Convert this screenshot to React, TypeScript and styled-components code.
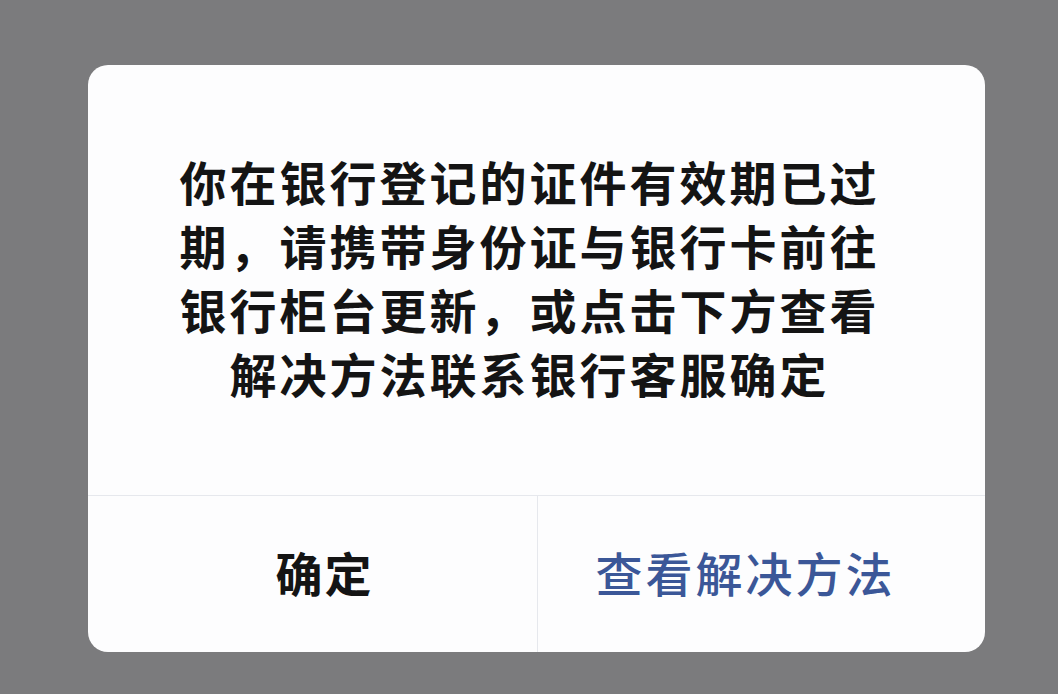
import React from 'react'
import styled, { createGlobalStyle } from 'styled-components'

const GlobalStyle = createGlobalStyle`
  html, body {
    margin: 0;
    padding: 0;
    background: #7b7b7d;
  }
  body {
    font-family: "Noto Sans CJK SC", "Noto Sans", sans-serif;
  }
`

const Page = styled.div`
  width: 1058px;
  height: 694px;
  box-sizing: border-box;
  padding: 65px 73px 0 88px;
`

const Dialog = styled.div`
  width: 897px;
  height: 587px;
  background: #fdfdfe;
  border-radius: 20px;
  overflow: hidden;
  display: flex;
  flex-direction: column;
`

const Body = styled.div`
  height: 430px;
  display: flex;
  align-items: center;
  justify-content: center;
  border-bottom: 1px solid #e6e8ed;
`

const Message = styled.p`
  margin: 0 14px 6px 0;
  width: 710px;
  text-align: center;
  font-size: 47px;
  line-height: 64px;
  letter-spacing: 3px;
  font-weight: 700;
  color: #141414;
`

const Actions = styled.div`
  flex: 1;
  display: grid;
  grid-template-columns: 449px 1fr;
`

const ActionButton = styled.button<{ $primary?: boolean; $left?: number; $right?: number }>`
  border: 0;
  background: transparent;
  font-family: inherit;
  font-size: 47px;
  letter-spacing: ${p => (p.$primary ? 3 : 2)}px;
  font-weight: ${p => (p.$primary ? 500 : 700)};
  color: ${p => (p.$primary ? '#3b5798' : '#141414')};
  padding: 0 ${p => p.$right ?? 0}px 6px ${p => p.$left ?? 0}px;
  & + & {
    border-left: 1px solid #e6e8ed;
  }
`

const lines = [
  '你在银行登记的证件有效期已过',
  '期，请携带身份证与银行卡前往',
  '银行柜台更新，或点击下方查看',
  '解决方法联系银行客服确定',
]

export default function App() {
  return (
    <>
      <GlobalStyle />
      <Page>
        <Dialog>
          <Body>
            <Message>
              {lines.map((l, i) => (
                <React.Fragment key={i}>
                  {l}
                  {i < lines.length - 1 && <br />}
                </React.Fragment>
              ))}
            </Message>
          </Body>
          <Actions>
            <ActionButton $left={24}>确定</ActionButton>
            <ActionButton $primary $right={32}>查看解决方法</ActionButton>
          </Actions>
        </Dialog>
      </Page>
    </>
  )
}
